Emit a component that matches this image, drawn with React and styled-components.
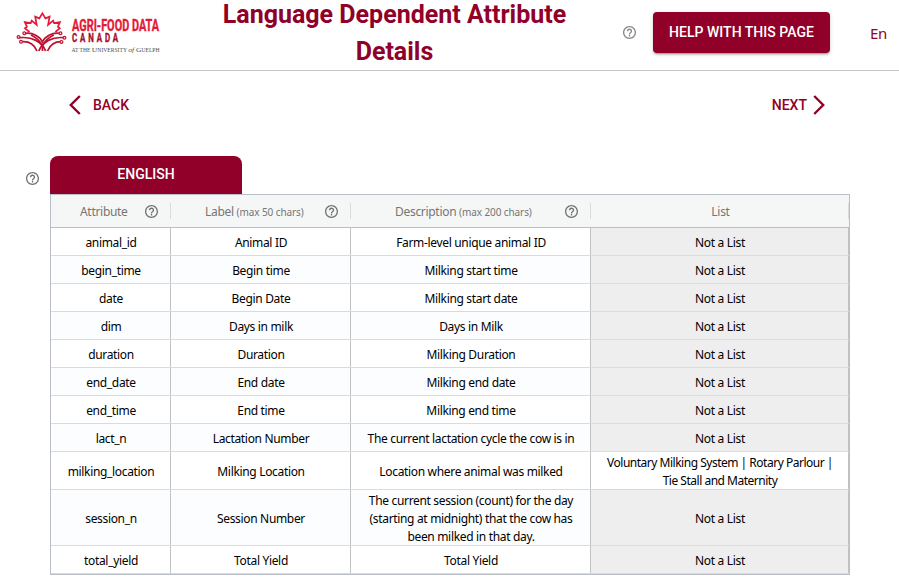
import React from "react";
import styled, { createGlobalStyle } from "styled-components";

const BRAND = "#910028";

const GlobalStyle = createGlobalStyle`
  * { box-sizing: border-box; }
  html { overflow: hidden; }
  body {
    margin: 0;
    background: #fff;
    font-family: "Noto Sans", sans-serif;
  }
`;

const Page = styled.div`
  width: 899px;
  height: 586px;
  overflow: hidden;
`;

const Header = styled.header`
  display: flex;
  height: 71px;
  border-bottom: 1px solid #c4c4c4;
`;

const Logo = styled.svg`
  width: 164px;
  height: 70px;
  flex: none;
`;

const Title = styled.h1`
  width: 361px;
  flex: none;
  margin: -4px 0 0 50px;
  color: ${BRAND};
  font: 700 25px/37px Roboto, sans-serif;
  text-align: center;
`;

const HeaderActions = styled.div`
  display: flex;
  align-items: center;
  height: 65px;
  margin-left: 48px;
`;

const HeaderHelp = styled.div`
  display: flex;
  padding-bottom: 1px;
`;

const HelpButton = styled.button`
  width: 177px;
  height: 41px;
  margin-left: 17px;
  padding: 0 0 1px;
  border: 0;
  border-radius: 4px;
  background: ${BRAND};
  color: #fff;
  font: 500 14px/24px Roboto, sans-serif;
  letter-spacing: 0.03px;
  box-shadow: 0 3px 1px -2px rgba(0, 0, 0, 0.2), 0 2px 2px rgba(0, 0, 0, 0.14), 0 1px 5px rgba(0, 0, 0, 0.12);
`;

const Language = styled.span`
  margin: 1px 0 0 40px;
  color: ${BRAND};
  font-size: 15px;
  letter-spacing: -0.3px;
`;

const Navigation = styled.nav`
  display: flex;
  justify-content: space-between;
  height: 34px;
  margin: 17px 74px 0 69px;
`;

const NavButton = styled.button`
  display: flex;
  align-items: center;
  gap: ${(p) => p.$gap}px;
  padding: 0;
  border: 0;
  background: none;
  color: ${BRAND};
  font: 500 14px/24px Roboto, sans-serif;
`;

const TabBar = styled.div`
  display: flex;
  align-items: center;
  height: 38px;
  margin: 34px 0 0 26px;
`;

const TabHelp = styled.div`
  display: flex;
  width: 24px;
  padding-top: 7px;
`;

const Tab = styled.button`
  width: 192px;
  height: 38px;
  padding: 0 0 2px;
  border: 0;
  border-radius: 8px 8px 0 0;
  background: ${BRAND};
  color: #fff;
  font: 500 14px/24px Roboto, sans-serif;
`;

const Grid = styled.div`
  width: 800px;
  margin-left: 50px;
  border: 1px solid #babfc7;
`;

const Row = styled.div`
  display: grid;
  grid-template-columns: 120px 180px 240px 258px;
  grid-template-rows: 100%;
  height: ${(p) => p.$height}px;
  border-bottom: 1px solid #d9dcde;
  background: ${(p) => (p.$odd ? "#fcfdfe" : "#fff")};
`;

const HeaderRow = styled(Row)`
  align-items: center;
  background: #f5f7f7;
  border-color: #babfc7;
`;

const HeaderCell = styled.div`
  display: flex;
  align-items: center;
  justify-content: ${(p) => (p.$plain ? "center" : "space-between")};
  height: 16px;
  padding: ${(p) => (p.$plain ? "0 0 0 2px" : `0 12px 0 ${p.$inset}px`)};
  border-right: 1px solid #d9dcde;
  color: #757575;
  font-size: 12px;
  letter-spacing: -0.3px;
  white-space: nowrap;
  small { font-size: 10px; letter-spacing: -0.1px; }
`;

const Cell = styled.div`
  display: flex;
  align-items: center;
  justify-content: center;
  min-height: 0;
  padding: 2px 0 0 1px;
  border-right: 1px solid #c0c2c4;
  background: ${(p) => (p.$muted ? "#eee" : "transparent")};
  color: #000;
  font-size: 12px;
  letter-spacing: ${(p) => (p.$tight ? "-0.49px" : "-0.33px")};
  line-height: 18px;
  text-align: center;
  white-space: pre;
`;

const HelpIcon = ({ color = "#707070" }) => (
  <svg width="13" height="13" viewBox="2 2 20 20" fill={color}>
    <path d="M11 18h2v-2h-2v2zm1-16C6.48 2 2 6.48 2 12s4.48 10 10 10 10-4.480 10-10S17.520 2 12 2zm0 18c-4.410 0-8-3.590-8-8s3.590-8 8-8 8 3.590 8 8-3.590 8-8 8zm0-14c-2.210 0-4 1.790-4 4h2c0-1.100.9-2 2-2s2 .9 2 2c0 2-3 1.750-3 5h2c0-2.250 3-2.500 3-5 0-2.210-1.790-4-4-4z" />
  </svg>
);

const Chevron = ({ next }) => (
  <svg width="12" height="20" viewBox="0 0 12 20" fill="none" stroke={BRAND} strokeWidth="2.4">
    <path d={next ? "M1.200 1l9 9-9 9" : "M10.800 1l-9 9 9 9"} />
  </svg>
);

const BrandLogo = () => (
  <Logo viewBox="0 0 164 70">
    <path
      d="M29.500 32L25 28.300l1.900-1.600L24.800 22l5.900 1 1-2.400 5 4.200-1.500-8.200 4.100 1.800 3.100-5 3.100 5 4.100-1.800-1.500 8.200 5-4.200 1 2.400 5.900-1-2.100 4.700 1.900 1.600-4.500 3.700"
      fill="none"
      stroke="#e31937"
      strokeWidth="1.7"
    />
    <g fill="none" stroke="#bd1230" strokeWidth="1.700">
      <path d="M25.800 33.300c7-.8 14 2.800 16.600 8.700 2.600-5.900 9.600-9.500 16.600-8.700" />
      <path d="M20 37.700c12-1.300 22 4 25.600 13.300M64.400 37.700c-12-1.300-22 4-25.600 13.300" />
      <path d="M22.500 41.700c7-.3 12 3.300 14.500 9.300M62 41.700c-7-.3-12 3.300-14.500 9.300" />
      <path d="M31 35c5 2.200 9 6 11.400 11M53.800 35c-5 2.200-9 6-11.400 11v5" />
      <g fill="#fff" strokeWidth="1.200">
        <circle cx="24.300" cy="33.300" r="1.400" />
        <circle cx="60.500" cy="33.300" r="1.400" />
        <circle cx="18.500" cy="37" r="1.400" />
        <circle cx="64.500" cy="37.700" r="1.400" />
        <circle cx="21" cy="41.700" r="1.400" />
        <circle cx="61.500" cy="41.900" r="1.400" />
      </g>
    </g>
    <g fontFamily="Roboto, sans-serif" fontWeight="700">
      <text transform="translate(72 31) scale(.66 1)" fontSize="16.500" fill="#e31937" stroke="#e31937" strokeWidth=".4" textLength="132" lengthAdjust="spacing">
        AGRI-FOOD DATA
      </text>
      <text transform="translate(72 41.700) scale(.66 1)" fontSize="12" fill="#a3112f" stroke="#a3112f" strokeWidth=".4" textLength="70" lengthAdjust="spacing">
        CANADA
      </text>
    </g>
    <text x="71.500" y="51.500" fontFamily="Liberation Serif, serif" fontSize="5.200" fill="#4a4f48" textLength="88" lengthAdjust="spacingAndGlyphs">
      AT THE <tspan fontSize="7">U</tspan>NIVERSITY <tspan fontSize="7" fontStyle="italic">of </tspan>
      <tspan fontSize="7">G</tspan>UELPH
    </text>
  </Logo>
);

const columns = [
  { name: "Attribute", inset: 29 },
  { name: "Label", limit: "(max 50 chars)", inset: 34 },
  { name: "Description", limit: "(max 200 chars)", inset: 44 },
  { name: "List" },
];

const NONE = "Not a List";
const rows = [
  ["animal_id", "Animal ID", "Farm-level unique animal ID", NONE],
  ["begin_time", "Begin time", "Milking start time", NONE],
  ["date", "Begin Date", "Milking start date", NONE],
  ["dim", "Days in milk", "Days in Milk", NONE],
  ["duration", "Duration", "Milking Duration", NONE],
  ["end_date", "End date", "Milking end date", NONE],
  ["end_time", "End time", "Milking end time", NONE],
  ["lact_n", "Lactation Number", "The current lactation cycle the cow is in", NONE],
  ["milking_location", "Milking Location", "Location where animal was milked", "Voluntary Milking System | Rotary Parlour |\nTie Stall and Maternity"],
  ["session_n", "Session Number", "The current session (count) for the day\n(starting at midnight) that the cow has\nbeen milked in that day.", NONE],
  ["total_yield", "Total Yield", "Total Yield", NONE],
];
const heights = { milking_location: 38, session_n: 56 };

export default function App() {
  return (
    <Page>
      <GlobalStyle />
      <Header>
        <BrandLogo />
        <Title>Language Dependent Attribute Details</Title>
        <HeaderActions>
          <HeaderHelp><HelpIcon color="#858585" /></HeaderHelp>
          <HelpButton>HELP WITH THIS PAGE</HelpButton>
          <Language>En</Language>
        </HeaderActions>
      </Header>
      <Navigation>
        <NavButton $gap={12}><Chevron />BACK</NavButton>
        <NavButton $gap={6}>NEXT<Chevron next /></NavButton>
      </Navigation>
      <TabBar>
        <TabHelp><HelpIcon /></TabHelp>
        <Tab>ENGLISH</Tab>
      </TabBar>
      <Grid>
        <HeaderRow $height={33}>
          {columns.map((c) => (
            <HeaderCell key={c.name} $plain={!c.inset} $inset={c.inset}>
              <span>{c.name} {c.limit && <small>{c.limit}</small>}</span>
              {c.inset && <HelpIcon />}
            </HeaderCell>
          ))}
        </HeaderRow>
        {rows.map((row, i) => (
          <Row key={row[0]} $height={heights[row[0]] || 28} $odd={i % 2 === 1}>
            {row.map((text, c) => (
              <Cell key={c} $muted={text === NONE} $tight={text.includes("|")}>{text}</Cell>
            ))}
          </Row>
        ))}
      </Grid>
    </Page>
  );
}
